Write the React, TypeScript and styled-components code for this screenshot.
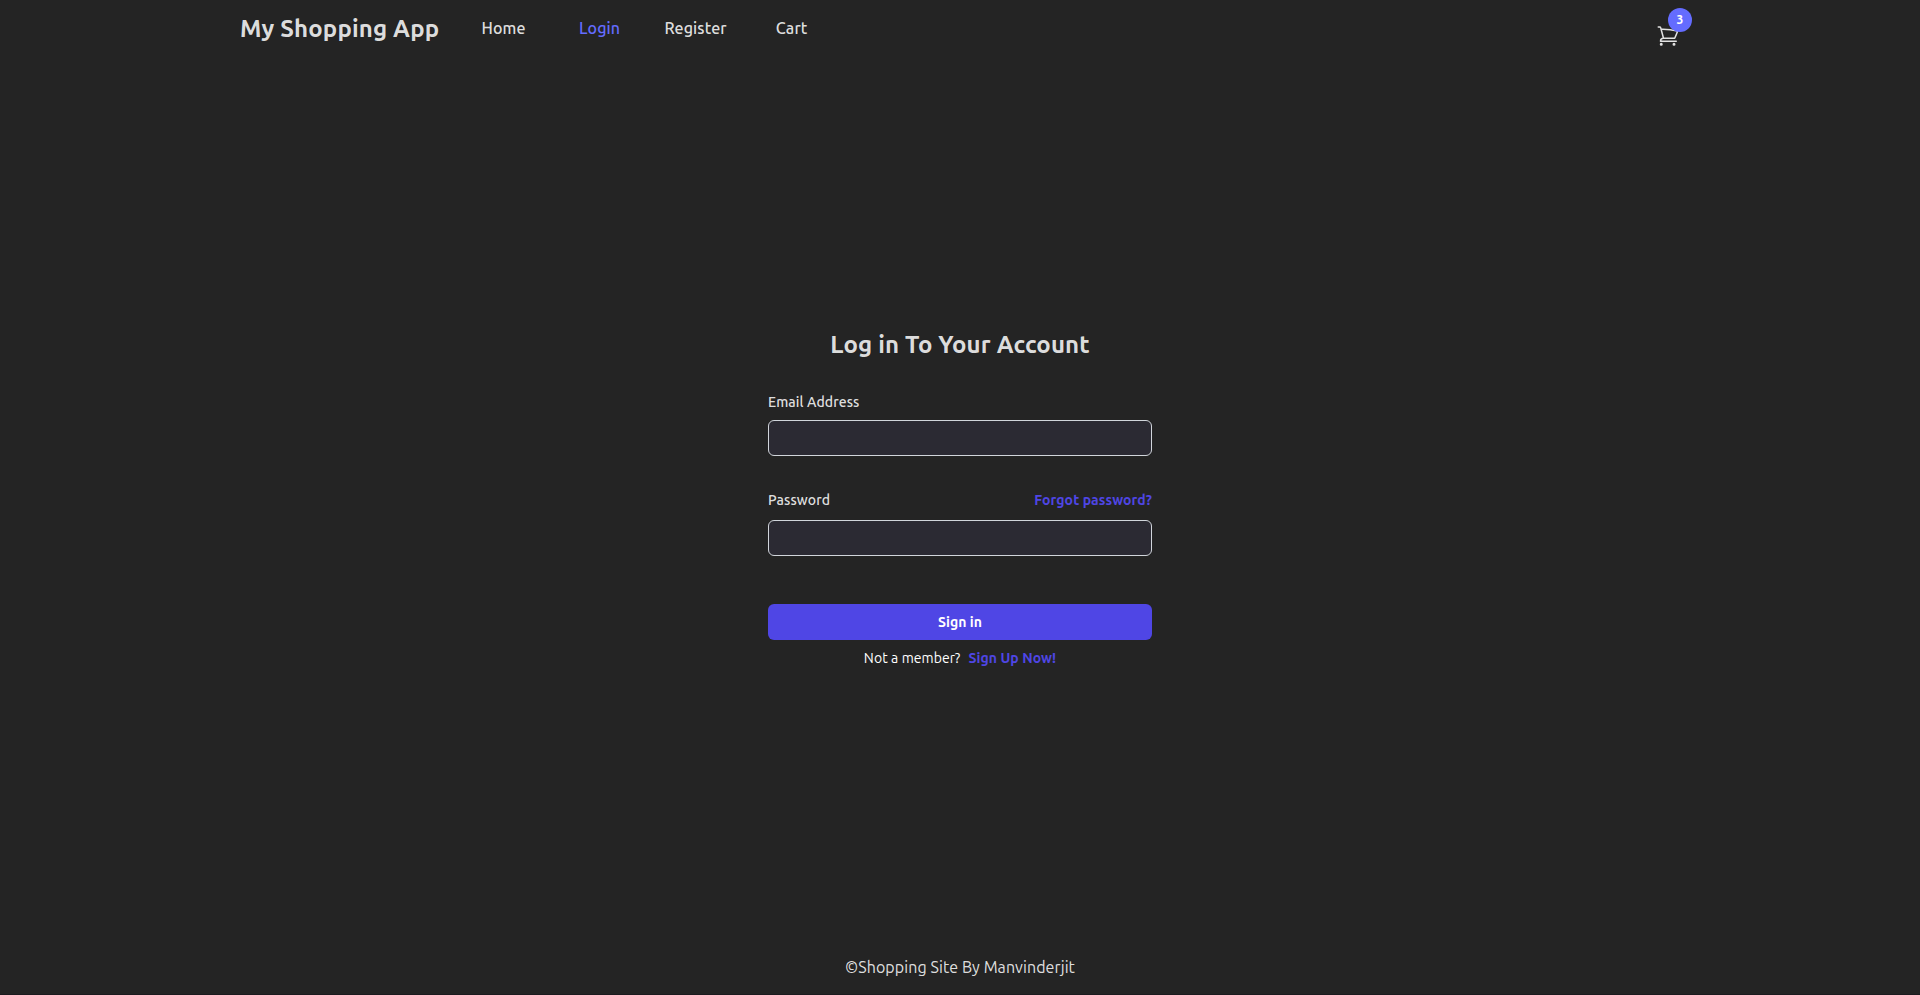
import React from "react";
import styled, { createGlobalStyle } from "styled-components";

const GlobalStyle = createGlobalStyle`
  *, *::before, *::after { box-sizing: border-box; }
  body {
    margin: 0;
    background: #242424;
    color: rgba(255, 255, 255, 0.87);
    font-family: Ubuntu, "Noto Sans", sans-serif;
    font-size: 16px;
    line-height: 24px;
  }
  a { color: inherit; text-decoration: none; }
  h1, h2, p { margin: 0; }
`;

const Page = styled.div`
  display: flex;
  flex-direction: column;
  height: 995px;
  border-bottom: 1px solid #1c1b1f;
`;

const Header = styled.header`
  display: flex;
  align-items: flex-start;
  width: 1440px;
  height: 56px;
  margin: 0 auto;
`;

const Brand = styled.h1`
  width: 215.6px;
  padding-top: 13px;
  font-size: 24px;
  font-weight: 700;
  letter-spacing: 0.16px;
  line-height: 32px;
  white-space: nowrap;
`;

const Nav = styled.nav`
  display: flex;
  padding-top: 16px;
`;

const NavLink = styled.a<{ $active?: boolean }>`
  width: 96px;
  text-align: center;
  font-weight: 500;
  letter-spacing: 0.12px;
  color: ${(p) => (p.$active ? "#646cff" : "inherit")};
`;

const CartButton = styled.a`
  position: relative;
  display: flex;
  margin: 24px 0 0 auto;
`;

const Badge = styled.span`
  position: absolute;
  top: -16px;
  right: -12px;
  width: 24px;
  height: 24px;
  border-radius: 50%;
  background: #646cff;
  color: #fff;
  font-size: 12px;
  font-weight: 700;
  line-height: 24px;
  text-align: center;
`;

const Main = styled.main`
  flex: 1;
  width: 384px;
  margin: 0 auto;
  padding-top: 273px;
`;

const Title = styled.h2`
  font-size: 24px;
  font-weight: 700;
  letter-spacing: 0.14px;
  line-height: 32px;
  text-align: center;
`;

const Form = styled.form`
  display: flex;
  flex-direction: column;
  padding-top: 29px;
  font-size: 14px;
`;

const LabelRow = styled.div`
  display: flex;
  justify-content: space-between;
`;

const Label = styled.label`
  font-weight: 500;
  letter-spacing: 0.1px;
`;

const Input = styled.input<{ $top: number; $bottom: number }>`
  height: 36px;
  margin: ${(p) => p.$top}px 0 ${(p) => p.$bottom}px;
  padding: 0 12px;
  border: 1px solid #d1d5db;
  border-radius: 6px;
  background: #2b2a33;
  color: #fff;
  outline: none;
`;

const AccentLink = styled.a`
  color: #4f46e5;
  font-weight: 600;
  letter-spacing: 0.08px;
`;

const SubmitButton = styled.button`
  height: 36px;
  padding: 0;
  border: 0;
  border-radius: 6px;
  background: #4f46e5;
  color: #fff;
  font: 600 14px/24px Ubuntu, "Noto Sans", sans-serif;
  letter-spacing: 0.08px;
`;

const SignUpRow = styled.p`
  display: flex;
  justify-content: center;
  gap: 8px;
  padding-top: 6px;
`;

const Prompt = styled.span`
  color: #fff;
  letter-spacing: 0.08px;
`;

const Footer = styled.footer`
  padding-bottom: 15px;
  letter-spacing: 0.08px;
  text-align: center;
`;

const CartIcon = () => (
  <svg
    width="24"
    height="24"
    viewBox="0 0 24 24"
    fill="none"
    stroke="currentColor"
    strokeWidth="1.5"
    strokeLinecap="round"
    strokeLinejoin="round"
  >
    <path d="M2.25 3h1.386c.51 0 .955.343 1.087.835l.383 1.437M7.5 14.25a3 3 0 0 0-3 3h15.75m-12.75-3h11.218c1.121-2.3 2.1-4.684 2.924-7.138a60.114 60.114 0 0 0-16.536-1.84M7.5 14.25 5.106 5.272M6 20.25a.75.75 0 1 1-1.5 0 .75.75 0 0 1 1.5 0Zm12.75 0a.75.75 0 1 1-1.5 0 .75.75 0 0 1 1.5 0Z" />
  </svg>
);

export default function App() {
  return (
    <Page>
      <GlobalStyle />
      <Header>
        <Brand>My Shopping App</Brand>
        <Nav>
          <NavLink href="#">Home</NavLink>
          <NavLink href="#" $active>Login</NavLink>
          <NavLink href="#">Register</NavLink>
          <NavLink href="#">Cart</NavLink>
        </Nav>
        <CartButton href="#" aria-label="Cart">
          <CartIcon />
          <Badge>3</Badge>
        </CartButton>
      </Header>
      <Main>
        <Title>Log in To Your Account</Title>
        <Form>
          <LabelRow>
            <Label htmlFor="email">Email Address</Label>
          </LabelRow>
          <Input id="email" type="email" $top={6} $bottom={32} />
          <LabelRow>
            <Label htmlFor="password">Password</Label>
            <AccentLink href="#">Forgot password?</AccentLink>
          </LabelRow>
          <Input id="password" type="password" $top={8} $bottom={48} />
          <SubmitButton type="button">Sign in</SubmitButton>
          <SignUpRow>
            <Prompt>Not a member?</Prompt>
            <AccentLink href="#">Sign Up Now!</AccentLink>
          </SignUpRow>
        </Form>
      </Main>
      <Footer>©Shopping Site By Manvinderjit</Footer>
    </Page>
  );
}
